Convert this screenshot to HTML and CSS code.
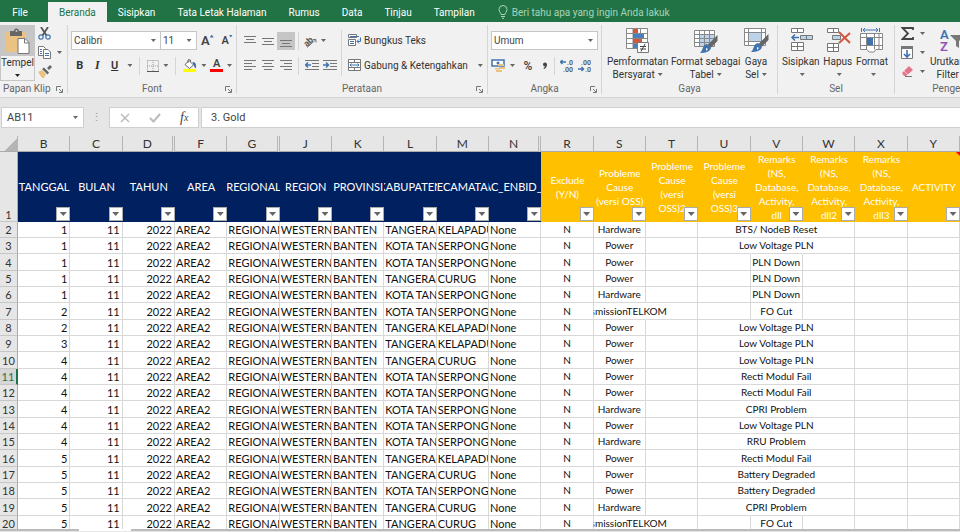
FILE: index.html
```html
<!DOCTYPE html>
<html lang="id">
<head>
    <meta charset="UTF-8">
    <meta name="viewport" content="width=device-width, initial-scale=1.0">
    <title>Excel</title>
    <link rel="stylesheet" href="styles.css">
</head>
<body>
    <nav class="tabs">
        <button class="tab file">File</button>
        <button class="tab active">Beranda</button>
        <button class="tab">Sisipkan</button>
        <button class="tab">Tata Letak Halaman</button>
        <button class="tab">Rumus</button>
        <button class="tab">Data</button>
        <button class="tab">Tinjau</button>
        <button class="tab">Tampilan</button>
        <label class="tell-me">
            <svg width="10" height="14" viewBox="0 0 10 14" fill="none" stroke="#a6d3b8"><path d="M3 9.500C3 7.500 1 7 1 4.500a4 4 0 0 1 8 0C9 7 7 7.500 7 9.500zM3 11.500h4M4 13.300h2"/></svg>
            <input type="text" placeholder="Beri tahu apa yang ingin Anda lakukan" aria-label="Beri tahu apa yang ingin Anda lakukan">
        </label>
    </nav>

    <div class="ribbon">
        <section class="group clipboard">
            <div class="group-body">
                <button class="paste">
                    <span class="paste-icon">
                        <svg width="26" height="27" viewBox="0 0 26 27"><path fill="#eac282" d="M1 4h20v20H1z"/><path fill="#666" d="M5 3h4a2.500 2.500 0 0 1 5 0h3v5H5z"/><circle cx="11.500" cy="3" r="1" fill="#c6c6c6"/><path fill="#fff" stroke="#777" d="M13 10.500h7l4 4v11H13z"/><path fill="none" stroke="#777" d="M19.500 10.500v4.500H24"/></svg>
                    </span>
                    <span>Tempel</span>
                    <i class="caret dark"></i>
                </button>
                <div class="stack">
                    <button class="icon" aria-label="Potong"><svg width="13" height="13" viewBox="0 0 13 13" fill="none"><path stroke="#555" stroke-width="1.800" d="M3 0l5.500 8.500M10 0L4.500 8.500"/><circle cx="3" cy="10" r="2.200" stroke="#3f73b0" stroke-width="1.200"/><circle cx="10" cy="10" r="2.200" stroke="#3f73b0" stroke-width="1.200"/></svg></button>
                    <button class="icon" aria-label="Salin"><svg width="13" height="13" viewBox="0 0 13 13" fill="#fff" stroke="#777"><path d="M.5.5h5l2 2v7h-7z"/><path d="M5.500 3.500h4.500l2.500 2.500v6.500h-7z"/><path stroke="#3f73b0" d="M2 3.500h2M2 5.500h2M2 7.500h2M7 7.500h4M7 9.500h4"/></svg><i class="caret"></i></button>
                    <button class="icon" aria-label="Pemformat"><svg width="14" height="13" viewBox="0 0 14 13"><path fill="#eac282" d="M0 7l4-2 4 4-2 4H4z"/><path fill="#666" d="M4 4l2-1.500 5 5L9.500 9.500zM9 3l3-3 2 2-3 3z"/></svg></button>
                </div>
            </div>
            <div class="group-label">Papan Klip<svg class="launch" width="7" height="7" viewBox="0 0 7 7"><path d="M.5 5V.5H5M3 3l3 3M6.500 3v3.500H3"/></svg></div>
        </section>

        <section class="group font">
            <div class="group-body rows">
                <div class="row">
                    <label class="combo face"><select aria-label="Font"><option>Calibri</option></select><i class="caret"></i></label>
                    <label class="combo size"><select aria-label="Ukuran font"><option>11</option></select><i class="caret"></i></label>
                    <button class="icon grow" aria-label="Perbesar font"><b>A</b><i class="mark up"></i></button>
                    <button class="icon shrink" aria-label="Perkecil font"><b>A</b><i class="mark down"></i></button>
                </div>
                <div class="row">
                    <button class="icon letter"><b>B</b></button>
                    <button class="icon letter italic">I</button>
                    <button class="icon letter underline">U</button>
                    <i class="caret"></i>
                    <i class="sep"></i>
                    <button class="icon" aria-label="Batas"><svg width="12" height="12" viewBox="0 0 12 12" fill="none" stroke="#999"><path stroke-dasharray="1 1" d="M.5.5h11v11M.5.500v11M6 0v11M0 6h12"/><path stroke="#555" d="M0 11.500h12"/></svg></button>
                    <i class="caret"></i>
                    <i class="sep"></i>
                    <button class="icon" aria-label="Warna isian"><svg width="14" height="13" viewBox="0 0 14 13"><path fill="#fff" stroke="#666" d="M2 5.500l4-4 4.500 4.500-4 3.500z"/><path fill="none" stroke="#666" d="M5 4V1a1.500 1.500 0 0 1 2.500 0v2"/><path fill="#3f73b0" d="M9.500 3c3 0 4 2 3.500 6-2 0-1.500-2-2.500-3z"/><path fill="#ff0" d="M0 10h13v3H0z"/></svg></button>
                    <i class="caret"></i>
                    <button class="icon font-color" aria-label="Warna font"><b>A</b></button>
                    <i class="caret"></i>
                </div>
            </div>
            <div class="group-label">Font<svg class="launch" width="7" height="7" viewBox="0 0 7 7"><path d="M.5 5V.5H5M3 3l3 3M6.500 3v3.500H3"/></svg></div>
        </section>

        <section class="group align">
            <div class="group-body">
                <div class="rows">
                    <div class="row">
                        <button class="icon al" aria-label="Rata atas"><svg width="12" height="14" viewBox="0 0 12 14"><path d="M0 2.500h12M2 5.500h8M0 8.500h12"/></svg></button>
                        <button class="icon al" aria-label="Rata tengah"><svg width="12" height="14" viewBox="0 0 12 14"><path d="M0 4.500h12M2 7.500h8M0 10.500h12"/></svg></button>
                        <button class="icon al pressed" aria-label="Rata bawah"><svg width="12" height="14" viewBox="0 0 12 14"><path d="M0 6.500h12M2 9.500h8M0 12.500h12"/></svg></button>
                        <i class="sep"></i>
                        <button class="icon" aria-label="Orientasi"><svg width="14" height="14" viewBox="0 0 14 14"><text x="0" y="10" transform="rotate(-45 6 7)" font-size="9" font-weight="bold" fill="#555">ab</text><path fill="none" stroke="#777" d="M4 13.500l9-8M10 5.500h3v3"/></svg></button>
                        <i class="caret"></i>
                    </div>
                    <div class="row">
                        <button class="icon al" aria-label="Rata kiri"><svg width="12" height="11" viewBox="0 0 12 11"><path d="M0 .5h12M0 3.500h8M0 6.500h12M0 9.500h8"/></svg></button>
                        <button class="icon al" aria-label="Pusat"><svg width="12" height="11" viewBox="0 0 12 11"><path d="M0 .5h12M2 3.500h8M0 6.500h12M2 9.500h8"/></svg></button>
                        <button class="icon al" aria-label="Rata kanan"><svg width="12" height="11" viewBox="0 0 12 11"><path d="M0 .5h12M4 3.500h8M0 6.500h12M4 9.500h8"/></svg></button>
                        <i class="sep"></i>
                        <button class="icon al" aria-label="Kurangi inden"><svg width="14" height="11" viewBox="0 0 14 11"><path d="M0 .5h14M7 3.500h7M7 6.500h7M0 9.500h14"/><path class="blue" d="M0 5h6M3 2.500L.5 5 3 7.500"/></svg></button>
                        <button class="icon al" aria-label="Tambah inden"><svg width="14" height="11" viewBox="0 0 14 11"><path d="M0 .5h14M7 3.500h7M7 6.500h7M0 9.500h14"/><path class="blue" d="M0 5h6M3 2.500L5.500 5 3 7.500"/></svg></button>
                    </div>
                </div>
                <i class="sep tall"></i>
                <div class="rows">
                    <div class="row"><button class="icon wide"><svg width="14" height="13" viewBox="0 0 14 13" fill="#fff" stroke="#777"><path d="M.5.500h8v3h-8zM.5 5.500h7v6h-7z"/><path stroke="#3f73b0" fill="none" d="M2 2.500h9M2 7.500h4M2 9.500h4M12.500 3.500v4H9M11 5.500l-2 2 2 2"/></svg>Bungkus Teks</button></div>
                    <div class="row"><button class="icon wide"><svg width="14" height="13" viewBox="0 0 14 13" fill="#fff" stroke="#777"><path d="M.5.500h12v11H.5zM.5 3.500h12M.5 8.500h12M6.500.5v3M6.500 8.500v3"/><path stroke="#3f73b0" fill="none" d="M2 6h9M3.500 4.500L2 6l1.500 1.500M9.500 4.500L11 6 9.500 7.500"/></svg>Gabung &amp; Ketengahkan<i class="caret"></i></button></div>
                </div>
            </div>
            <div class="group-label">Perataan<svg class="launch" width="7" height="7" viewBox="0 0 7 7"><path d="M.5 5V.5H5M3 3l3 3M6.500 3v3.500H3"/></svg></div>
        </section>

        <section class="group number">
            <div class="group-body rows">
                <div class="row">
                    <label class="combo format"><select aria-label="Format angka"><option>Umum</option></select><i class="caret"></i></label>
                </div>
                <div class="row">
                    <button class="icon" aria-label="Format akuntansi"><svg width="14" height="13" viewBox="0 0 14 13"><path fill="#fff" stroke="#3f73b0" stroke-width="1.500" d="M1 1h12v6H1z"/><circle cx="7" cy="4" r="1.500" fill="#3f73b0"/><path fill="#eac282" d="M7 5h6v2H7zM8 8h6v2H8zM4 9h5v1.500H4zM5 11h6v2H5z"/></svg></button>
                    <i class="caret"></i>
                    <button class="icon percent">%</button>
                    <button class="icon" aria-label="Gaya koma"><svg width="8" height="10" viewBox="0 0 8 10"><path fill="#444" d="M4 1.500a2 2 0 0 1 2 2C6 6 4.500 7.500 3 8l-.5-1C3.500 6.500 4 6 4 5.500a2 2 0 0 1 0-4z"/></svg></button>
                    <i class="sep"></i>
                    <button class="icon" aria-label="Tambah desimal"><svg width="13" height="13" viewBox="0 0 13 13"><text x="7" y="6" class="dec">.0</text><text x="3" y="13" class="dec">.00</text><path class="blue" fill="none" d="M0 3h6M2.500 1L.5 3l2 2"/></svg></button>
                    <button class="icon" aria-label="Kurangi desimal"><svg width="13" height="13" viewBox="0 0 13 13"><text x="3" y="6" class="dec">.00</text><text x="7" y="13" class="dec">.0</text><path class="blue" fill="none" d="M0 10h6M3.500 8l2 2-2 2"/></svg></button>
                </div>
            </div>
            <div class="group-label">Angka<svg class="launch" width="7" height="7" viewBox="0 0 7 7"><path d="M.5 5V.5H5M3 3l3 3M6.500 3v3.500H3"/></svg></div>
        </section>

        <section class="group styles">
            <div class="group-body">
                <button class="big">
                    <svg width="26" height="26" viewBox="0 0 26 26"><path fill="#fff" stroke="#888" d="M1.500.5h21v20h-21zM8 .5v20M15.500.500v20M1.500 5.500h21M1.500 10.500h21M1.500 15.500h21"/><path fill="#d0573c" d="M8 1h5v4H8zM8 11h9v4H8z"/><path fill="#4b7ebc" d="M8 6h11v4H8zM8 16h4v4H8z"/><path fill="#fff" stroke="#777" d="M12.500 14.500h11v10h-11z"/><path stroke="#444" d="M15 18.500h6M15 21h6M20 16l-4 7.500"/></svg>
                    <span>Pemformatan<br>Bersyarat<i class="caret"></i></span>
                </button>
                <button class="big">
                    <svg width="26" height="26" viewBox="0 0 26 26"><path fill="#fff" stroke="#888" d="M1.500 2.500h20v16h-20z"/><path fill="#bcd3ea" d="M7 7h14v11H7z"/><path fill="none" stroke="#888" d="M6.500 2.500v16M11.500 2.500v16M16.500 2.500v16M1.500 6.500h20M1.500 10.500h20M1.500 14.500h20"/><path fill="#666" d="M24.500 7v6l-7 7-3-3z"/><path fill="#3f73b0" d="M14 16l4 4c-1 4-6 5-11 5 3-2 2-8 7-9z"/><path fill="#fff" d="M13 20l2 1-2 2z"/></svg>
                    <span>Format sebagai<br>Tabel<i class="caret"></i></span>
                </button>
                <button class="big">
                    <svg width="26" height="26" viewBox="0 0 26 26"><path fill="#fff" stroke="#888" d="M1.500.5h21v17h-21zM5.500.5v17M18.500.5v17M1.500 4.500h21M1.500 13.500h21"/><path fill="#bcd3ea" d="M6 5h12v8H6z"/><path fill="#666" d="M25.500 6v6l-7 7-3-3z"/><path fill="#3f73b0" d="M15 15l4 4c-1 4-6 5-11 5 3-2 2-8 7-9z"/><path fill="#fff" d="M14 19l2 1-2 2z"/></svg>
                    <span>Gaya<br>Sel<i class="caret"></i></span>
                </button>
            </div>
            <div class="group-label">Gaya</div>
        </section>

        <section class="group cells">
            <div class="group-body">
                <button class="big">
                    <svg width="24" height="26" viewBox="0 0 24 26"><path fill="#fff" stroke="#777" d="M2.500.5h12v4h-12zM8.500.5v4M2.500 14.500h12v8h-12zM8.500 14.500v8M2.500 18.500h12"/><path fill="#bcd3ea" stroke="#777" d="M11.500 7.500h12v4h-12zM17.500 7.500v4"/><path fill="none" stroke="#3f73b0" stroke-width="1.500" d="M3 9.500h7M6 6.500l-3 3 3 3"/></svg>
                    <span>Sisipkan<br><i class="caret"></i></span>
                </button>
                <button class="big">
                    <svg width="26" height="26" viewBox="0 0 26 26"><path fill="#fff" stroke="#777" d="M2.500.5h11v4h-11zM8.500.5v4M2.500 15.500h11v8h-11zM8.500 15.500v8M2.500 19.500h11"/><path fill="#bcd3ea" stroke="#777" d="M7.500 7.500h8v4h-8z"/><path stroke="#d0573c" stroke-width="2" d="M14 4l11 11M25 5L14 15"/></svg>
                    <span>Hapus<br><i class="caret"></i></span>
                </button>
                <button class="big">
                    <svg width="24" height="26" viewBox="0 0 24 26"><path fill="none" stroke="#3f73b0" d="M1.500 0v4M19.500 0v4M3 2h15M5 0L3 2l2 2M16 0l2 2-2 2"/><path fill="#fff" stroke="#888" d="M.5 5.500h22v16H16l-2 2.500H9L7 21.500H.5zM6.500 5.500v16M14.500 5.500v16M19 5.500v16M.5 9.500h22M.5 17.500h22"/><path fill="#3f73b0" d="M7 10h6v7H7z"/></svg>
                    <span>Format<br><i class="caret"></i></span>
                </button>
            </div>
            <div class="group-label">Sel</div>
        </section>

        <section class="group editing">
            <div class="group-body">
                <div class="stack">
                    <button class="icon" aria-label="Jumlah otomatis"><svg width="13" height="13" viewBox="0 0 13 13"><path fill="none" stroke="#444" stroke-width="1.800" d="M12 3V1H1.500L7 6.500 1.500 12H12v-2"/></svg><i class="caret"></i></button>
                    <button class="icon" aria-label="Isi"><svg width="13" height="13" viewBox="0 0 13 13"><path fill="#fff" stroke="#777" d="M.5.500h11v12H.5z"/><path fill="#777" d="M0 0h12v3H0z"/><path fill="none" stroke="#3f73b0" stroke-width="1.600" d="M6 4v7M3 8l3 3 3-3"/></svg><i class="caret"></i></button>
                    <button class="icon" aria-label="Hapus isi"><svg width="13" height="12" viewBox="0 0 13 12"><path fill="#e4768b" d="M1 7l7-7 4 4-7 6H3z"/><path stroke="#f7c9d1" d="M3 5l4 4"/><path stroke="#777" d="M4 10.500h7"/></svg><i class="caret"></i></button>
                </div>
                <button class="big sort">
                    <svg width="26" height="26" viewBox="0 0 26 26"><text x="1" y="11" class="az" fill="#3f73b0">A</text><text x="1" y="23" class="az" fill="#9152b5">Z</text><path fill="#777" d="M11 7h15l-6 6v7l-3-2v-5z"/></svg>
                    <span>Urutkan &amp;<br>Filter<i class="caret"></i></span>
                </button>
            </div>
            <div class="group-label">Pengeditan</div>
        </section>
    </div>

    <div class="formula-bar">
        <label class="name-box"><input type="text" value="AB11" aria-label="Kotak nama"><i class="caret"></i></label>
        <span class="dots">⋮</span>
        <div class="fx">
            <button class="icon" aria-label="Batal"><svg width="10" height="10" viewBox="0 0 10 10"><path stroke="#bbb" stroke-width="1.500" d="M1 1l8 8M9 1L1 9"/></svg></button>
            <button class="icon" aria-label="Masukkan"><svg width="12" height="10" viewBox="0 0 12 10"><path fill="none" stroke="#bbb" stroke-width="2" d="M1 5l3.500 3.500L11 1"/></svg></button>
            <button class="icon fn">f<small>x</small></button>
        </div>
        <input class="formula" type="text" value="3. Gold" aria-label="Rumus">
    </div>

    <main class="sheet">
        <table>
            <thead id="head"></thead>
            <tbody id="rows"></tbody>
        </table>
    </main>
    <footer class="sheet-tabs"><span></span><span class="current"></span><span></span></footer>

    <script>
        const columns = [
            ['B', 'TANGGAL'], ['C', 'BULAN'], ['D', 'TAHUN'], ['F', 'AREA'], ['G', 'REGIONAL'], ['J', 'REGION'],
            ['K', 'PROVINSI'], ['L', 'KABUPATEN'], ['M', 'KECAMATAN'], ['N', 'TAC_ENBID_CI'],
            ['R', 'Exclude (Y/N)'], ['S', 'Probleme Cause (versi OSS)'], ['T', 'Probleme Cause (versi OSS)2'],
            ['U', 'Probleme Cause (versi OSS)3'], ['V', 'Remarks (NS, Database, Activity, dll'],
            ['W', 'Remarks (NS, Database, Activity, dll2'], ['X', 'Remarks (NS, Database, Activity, dll3'], ['Y', 'ACTIVITY']
        ];
        // columns followed by hidden ones get a double divider
        const beforeHidden = ['D', 'G', 'N'];

        const data = [
            [1, 'TANGERAN', 'KELAPADU', 'Hardware', 'BTS/ NodeB Reset'],
            [1, 'KOTA TAN', 'SERPONGU', 'Power', 'Low Voltage PLN'],
            [1, 'KOTA TAN', 'SERPONGU', 'Power', 'PLN Down'],
            [1, 'TANGERAN', 'CURUG', 'Power', 'PLN Down'],
            [1, 'KOTA TAN', 'SERPONGU', 'Hardware', 'PLN Down'],
            [2, 'KOTA TAN', 'SERPONGU', 'TransmissionTELKOM', 'FO Cut'],
            [2, 'TANGERAN', 'KELAPADU', 'Power', 'Low Voltage PLN'],
            [3, 'TANGERAN', 'KELAPADU', 'Power', 'Low Voltage PLN'],
            [4, 'TANGERAN', 'CURUG', 'Power', 'Low Voltage PLN'],
            [4, 'KOTA TAN', 'SERPONGU', 'Power', 'Recti Modul Fail'],
            [4, 'KOTA TAN', 'SERPONGU', 'Power', 'Recti Modul Fail'],
            [4, 'KOTA TAN', 'SERPONG', 'Hardware', 'CPRI Problem'],
            [4, 'KOTA TAN', 'SERPONG', 'Power', 'Low Voltage PLN'],
            [4, 'KOTA TAN', 'SERPONG', 'Hardware', 'RRU Problem'],
            [5, 'TANGERAN', 'KELAPADU', 'Power', 'Recti Modul Fail'],
            [5, 'TANGERAN', 'CURUG', 'Power', 'Battery Degraded'],
            [5, 'KOTA TAN', 'SERPONGU', 'Power', 'Battery Degraded'],
            [5, 'TANGERAN', 'CURUG', 'Hardware', 'CPRI Problem'],
            [5, 'TANGERAN', 'CURUG', 'TransmissionTELKOM', 'FO Cut']
        ];

        let letters = '<tr class="letters"><th class="corner"></th>';
        let titles = '<tr class="titles"><th class="num">1</th>';
        columns.forEach(([letter, title], i) => {
            const side = i < 10 ? 'navy' : 'gold';
            const flag = letter === 'Y' ? '<i class="note"></i>' : '';
            letters += `<th class="${beforeHidden.includes(letter) ? 'gap' : ''}">${letter}</th>`;
            titles += `<th class="${side}"><div>${title}</div>${flag}<button class="filter" aria-label="Filter ${title}"><i class="caret"></i></button></th>`;
        });
        document.getElementById('head').innerHTML = letters + '</tr>' + titles + '</tr>';

        document.getElementById('rows').innerHTML = data.map(([day, city, district, cause, remark], i) => {
            const spill = cause.length > 10;
            const wide = remark.length > 10;
            const open = wide ? 'open' : '';
            return `<tr>
                <th class="num ${i === 9 ? 'selected' : ''}">${i + 2}</th>
                <td class="right">${day}</td><td class="right">11</td><td class="right">2022</td>
                <td>AREA2</td><td>REGIONAL</td><td>WESTERN</td><td>BANTEN</td>
                <td>${city}</td><td>${district}</td><td>None</td>
                <td class="center">N</td>
                <td class="center ${spill ? 'open spill' : ''}"><div>${cause}</div></td><td></td>
                <td class="${open}"></td><td class="center ${open}"><div>${remark}</div></td><td></td>
                <td></td><td></td>
            </tr>`;
        }).join('');
    </script>
</body>
</html>
```

FILE: styles.css
```css
* {
    box-sizing: border-box;
}
body {
    margin: 0;
    height: 100vh;
    display: flex;
    flex-direction: column;
    overflow: hidden;
    background-color: #e6e6e6;
    color: #444;
    font-family: Roboto, "Noto Sans", sans-serif;
    font-size: 10px;
}
button, input, select {
    font: inherit;
    color: inherit;
    border: none;
    background: none;
    padding: 0;
    margin: 0;
}
svg {
    flex: none;
}
.caret {
    flex: none;
    width: 5px;
    height: 3px;
    background-color: #666;
    clip-path: polygon(0 0, 100% 0, 50% 100%);
}
.caret.dark {
    background-color: #222;
}

/* tabs */
.tabs {
    flex: none;
    display: flex;
    height: 22px;
    padding-top: 2px;
    background-color: #217346;
}
.tab {
    padding: 0 11px;
    color: #fff;
    white-space: nowrap;
}
.tab.file {
    width: 48px;
    padding: 0 20px 0 12px;
}
.tab.active {
    background-color: #f1f1f1;
    color: #217346;
}
.tell-me {
    display: flex;
    align-items: center;
    gap: 4px;
    margin-left: 12px;
    overflow: hidden;
}
.tell-me input {
    width: 158px;
}
.tell-me input::placeholder {
    color: #a6d3b8;
}

/* ribbon */
.ribbon {
    flex: none;
    display: flex;
    height: 76px;
    padding: 3px 0;
    overflow: hidden;
    background-color: #f1f1f1;
    border-bottom: 1px solid #d2d2d2;
}
.group {
    flex: none;
    display: flex;
    flex-direction: column;
    border-right: 1px solid #d5d5d5;
}
.group-body {
    flex: 1;
    display: flex;
}
.group-label {
    display: flex;
    align-items: center;
    justify-content: center;
    height: 12px;
    color: #666;
    position: relative;
}
.launch {
    position: absolute;
    right: 4px;
    bottom: 1px;
    fill: none;
    stroke: #777;
}
.clipboard { width: 68px; }
.clipboard .group-label { justify-content: flex-start; padding-left: 3px; }
.font { width: 169px; }
.align { width: 251px; }
.number { width: 114px; }
.styles { width: 176px; }
.cells { width: 117px; }
.editing { width: 126px; }
.rows {
    display: flex;
    flex-direction: column;
    padding-top: 6px;
    gap: 6px;
}
.row {
    display: flex;
    align-items: center;
    height: 19px;
}
.icon {
    display: flex;
    align-items: center;
    justify-content: center;
}
.sep {
    width: 1px;
    height: 18px;
    background-color: #d5d5d5;
}
.stack {
    display: flex;
    flex-direction: column;
    align-items: flex-start;
    gap: 6px;
    padding: 2px 0 0 3px;
}
.stack .icon {
    gap: 6px;
    height: 13px;
}
.paste {
    display: flex;
    flex-direction: column;
    align-items: center;
    width: 35px;
    height: 56px;
    border: 1px solid #c6c6c6;
    color: #333;
    line-height: 14px;
}
.paste-icon {
    width: 100%;
    height: 30px;
    padding-top: 2px;
    text-align: center;
    background-color: #c6c6c6;
}
.paste .caret {
    margin-top: 4px;
}

.combo {
    display: flex;
    align-items: center;
    height: 19px;
    padding-right: 4px;
    background-color: #fff;
    border: 1px solid #c6c6c6;
}
.combo select {
    appearance: none;
    flex: 1;
    min-width: 0;
    padding-left: 2px;
    outline: none;
}
.font .rows {
    padding-left: 3px;
}
.face { width: 91px; }
.size { width: 36px; border-left: none; }
.format { width: 107px; }
.grow {
    width: 22px;
    font-size: 13px;
}
.shrink {
    width: 18px;
    font-size: 11px;
}
.grow b, .shrink b, .font-color b {
    font-weight: 600;
}
.mark {
    width: 4px;
    height: 3px;
    margin-bottom: 9px;
    background-color: #3f73b0;
    clip-path: polygon(0 100%, 100% 100%, 50% 0);
}
.mark.down {
    clip-path: polygon(0 0, 100% 0, 50% 100%);
}
.letter {
    width: 18px;
    font-size: 11px;
    color: #333;
}
.italic {
    font-family: "Liberation Serif", serif;
    font-size: 12px;
    font-style: italic;
    font-weight: bold;
}
.underline {
    font-weight: 600;
    text-decoration: underline;
}
.font .row .caret {
    margin: 0 4px;
}
.font .row .combo .caret {
    margin: 0;
}
.font .sep {
    margin: 0 7px 0 3px;
}
.font-color {
    width: 13px;
    height: 13px;
    font-size: 11px;
    line-height: 10px;
    border-bottom: 3px solid #f00;
}

.align .group-body {
    padding-left: 4px;
}
.al {
    width: 18px;
    height: 18px;
}
.al path {
    fill: none;
    stroke: #777;
}
.pressed {
    background-color: #c6c6c6;
}
.al .blue, .blue {
    stroke: #3f73b0;
    stroke-width: 1.5;
}
.align .sep {
    margin: 0 4px 0 3px;
}
.align .row .caret {
    margin-left: 4px;
}
.align .sep.tall {
    height: 46px;
    margin: 5px 6px 0 2px;
}
.wide {
    gap: 2px;
    color: #333;
    white-space: nowrap;
}
.align .wide .caret {
    margin: 0 0 0 8px;
}

.number .rows {
    padding-left: 3px;
}
.number .row {
    gap: 5px;
}
.percent {
    width: 16px;
    font-size: 12px;
    font-weight: 600;
}
.dec {
    font-size: 7px;
    font-weight: 600;
    fill: #555;
}

.big {
    display: flex;
    flex-direction: column;
    align-items: center;
    padding-top: 3px;
    line-height: 13px;
    color: #333;
    white-space: nowrap;
}
.big span {
    padding-top: 1px;
}
.big .caret {
    display: inline-block;
    margin-left: 3px;
    vertical-align: 2px;
}
.styles .group-body {
    justify-content: space-between;
    padding: 0 8px 0 5px;
}
.cells .group-body {
    justify-content: space-between;
    padding: 0 6px 0 4px;
}
.editing .group-body {
    gap: 5px;
}
.editing .stack {
    padding-left: 6px;
}
.az {
    font-size: 13px;
    font-weight: 600;
}

/* formula bar */
.formula-bar {
    flex: none;
    display: flex;
    align-items: center;
    height: 38px;
    padding: 9px 0 8px 1px;
    font-size: 11px;
}
.name-box, .fx, .formula {
    height: 21px;
    background-color: #fff;
    border: 1px solid #cfcfcf;
}
.name-box {
    display: flex;
    align-items: center;
    width: 83px;
    padding: 0 5px;
}
.name-box input {
    flex: 1;
    min-width: 0;
}
.dots {
    width: 25px;
    text-align: center;
    color: #999;
}
.fx {
    display: flex;
    justify-content: space-around;
    width: 90px;
    margin-right: 2px;
}
.fn {
    font-family: "Liberation Serif", serif;
    font-size: 14px;
    font-style: italic;
}
.fn small {
    font-size: 10px;
}
.formula {
    flex: 1;
    padding-left: 9px;
    border-right: none;
}

/* sheet */
.sheet {
    flex: 1;
    min-height: 0;
    overflow: hidden;
    font-family: Lato, sans-serif;
}
.sheet table {
    width: 100%;
    table-layout: fixed;
    border-collapse: separate;
    border-spacing: 0;
    background-color: #fff;
    color: #111;
}
.sheet th, .sheet td {
    padding: 0;
    font-weight: normal;
    white-space: nowrap;
    overflow: hidden;
}
.letters th {
    height: 16px;
    font-size: 12px;
    line-height: 15px;
    color: #333;
    background-color: #e6e6e6;
    border-right: 1px solid #b5b5b5;
    border-bottom: 1px solid #ababab;
}
.letters .corner {
    width: 18px;
    background-image: linear-gradient(135deg, transparent 60%, #b5b5b5 60%);
}
.letters .gap {
    border-right: 3px double #b5b5b5;
}
.sheet .num {
    background-color: #e6e6e6;
    color: #333;
    font-size: 11px;
    border-right: 1px solid #ababab;
    border-bottom: 1px solid #c6c6c6;
}
.sheet .num.selected {
    background-color: #d6d6d6;
    color: #217346;
    border-right: 2px solid #217346;
}
.titles th {
    position: relative;
    height: 70px;
    color: #fff;
    font-size: 11px;
}
.titles .num {
    vertical-align: bottom;
}
.navy {
    background-color: #002060;
}
.titles .navy {
    padding-bottom: 2px;
}
.navy div {
    display: flex;
    justify-content: center;
}
.gold {
    background-color: #ffc000;
}
.titles .gold div {
    padding: 0 2px;
    font-size: 10px;
    line-height: 14px;
    white-space: normal;
}
.filter {
    position: absolute;
    right: 0;
    bottom: 1px;
    display: flex;
    align-items: center;
    justify-content: center;
    width: 14px;
    height: 14px;
    background-color: #fff;
    border: 1px solid #ababab;
}
.filter .caret {
    width: 7px;
    height: 4px;
}
.note {
    position: absolute;
    top: 0;
    right: 0;
    border: 2px solid #f00;
    border-left-color: transparent;
    border-bottom-color: transparent;
}
.sheet tbody tr {
    height: 16px;
}
.sheet tbody tr:nth-child(3n) {
    height: 17px;
}
.sheet td {
    padding-left: 1px;
    font-size: 11px;
    line-height: 15px;
    border-right: 1px solid #d8d8d8;
    border-bottom: 1px solid #d8d8d8;
}
.sheet .right {
    padding-right: 2px;
    text-align: right;
}
.sheet .center {
    padding: 0;
    font-size: 10px;
    text-align: center;
}
.center div {
    display: flex;
    justify-content: center;
}
.sheet .open {
    overflow: visible;
    border-right-color: transparent;
}
/* long text runs into the empty cell on the right only */
.spill div {
    clip-path: inset(0 -60px 0 0);
}

.sheet-tabs {
    flex: none;
    display: flex;
    height: 3px;
}
.sheet-tabs span {
    width: 79px;
    border-top: 2px solid #bbb;
}
.sheet-tabs .current {
    width: 52px;
    border-top-color: #fff;
}
.sheet-tabs span:last-child {
    flex: 1;
}
```
